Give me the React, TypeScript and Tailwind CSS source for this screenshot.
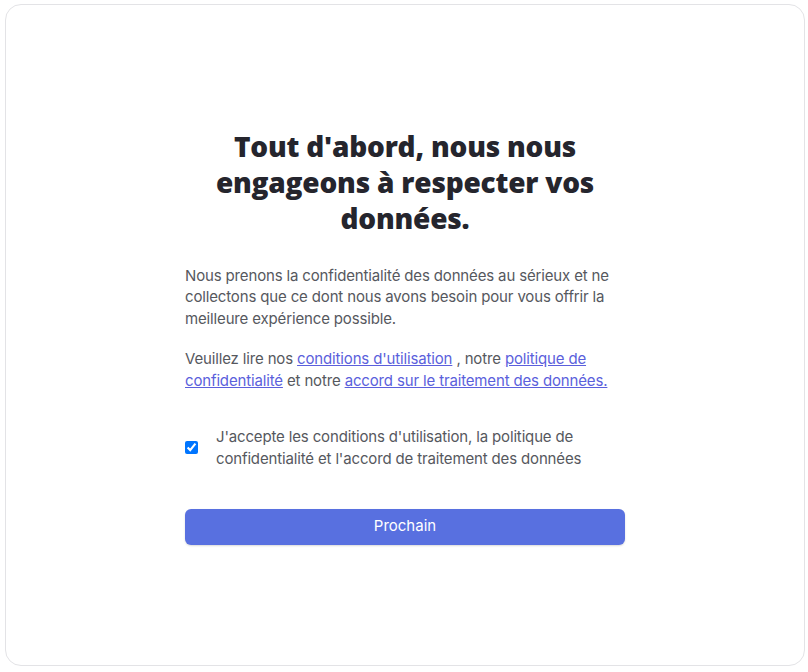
import React from "react";

export default function App() {
  return (
    <div className="w-[808px] h-[672px] bg-white pt-[4px] pl-[5px]" style={{ fontFamily: "Inter, 'Liberation Sans', sans-serif" }}>
      <div className="w-[800px] h-[662px] rounded-[16px] border border-[#e3e3e6] bg-white flex items-center justify-center">
        <div className="w-[440px] flex flex-col pt-[3px]">
          <h1
            className="text-center text-[28px] leading-[36px] font-extrabold text-[#25252d] px-2 tracking-[-0.2px]"
            style={{ fontFamily: "'Open Sans', 'Liberation Sans', sans-serif" }}
          >
            Tout d'abord, nous nous engageons à respecter vos données.
          </h1>
          <p className="mt-[29px] text-[15px] tracking-[-0.15px] leading-[21.2px] text-[#56585e]">
            Nous prenons la confidentialité des données au sérieux et ne collectons que ce dont nous avons besoin pour vous offrir la meilleure expérience possible.
          </p>
          <p className="mt-[19.5px] text-[15px] tracking-[-0.15px] leading-[21.2px] text-[#56585e]">
            Veuillez lire nos{" "}
            <a className="text-[#5b5fdc] underline">conditions d'utilisation</a> , notre{" "}
            <a className="text-[#5b5fdc] underline">politique de confidentialité</a> et notre{" "}
            <a className="text-[#5b5fdc] underline">accord sur le traitement des données.</a>
          </p>
          <label className="mt-[35.5px] flex items-center gap-[18px]">
            <input type="checkbox" checked readOnly className="w-[13px] h-[13px] shrink-0 accent-[#0075ff]" />
            <span className="text-[15px] tracking-[-0.15px] leading-[21.2px] text-[#56585e]">
              J'accepte les conditions d'utilisation, la politique de confidentialité et l'accord de traitement des données
            </span>
          </label>
          <button className="mt-[40px] h-[36px] w-full rounded-[6px] bg-[#5870e0] text-white text-[15px] shadow-[0_1px_2px_rgba(0,0,0,0.15)]">
            Prochain
          </button>
        </div>
      </div>
    </div>
  );
}
